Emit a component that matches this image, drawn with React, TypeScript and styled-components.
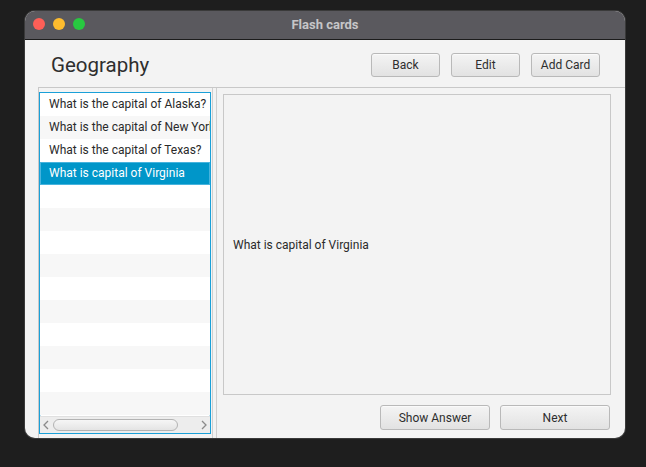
import React from 'react';
import styled, { createGlobalStyle } from 'styled-components';

const cards = [
    'What is the capital of Alaska?',
    'What is the capital of New York?',
    'What is the capital of Texas?',
    'What is capital of Virginia',
];

const ROW_COUNT = 14;

const App: React.FC = () => {
    const selected = 3;
    const rows = Array.from({ length: ROW_COUNT }, (_, i) => cards[i] ?? '');

    return (
        <>
            <GlobalStyle />
            <Desktop>
                <Window>
                    <TitleBar>
                        <Lights>
                            <Light color="#fe5f57" />
                            <Light color="#febc2e" />
                            <Light color="#28c840" />
                        </Lights>
                        <WindowTitle>Flash cards</WindowTitle>
                    </TitleBar>
                    <Header>
                        <DeckTitle>Geography</DeckTitle>
                        <HeaderButtons>
                            <Button>Back</Button>
                            <Button>Edit</Button>
                            <Button>Add Card</Button>
                        </HeaderButtons>
                    </Header>
                    <SplitPane>
                        <LeftPane>
                            <CardList>
                                <Rows>
                                    {rows.map((text, i) => (
                                        <Row key={i} odd={i % 2 === 1} selected={i === selected}>
                                            {text}
                                        </Row>
                                    ))}
                                </Rows>
                                <ScrollBar>
                                    <Arrow>
                                        <svg width="8" height="10" viewBox="0 0 8 10">
                                            <path d="M6 1 L2 5 L6 9" fill="none" stroke="#8a8a8a" strokeWidth="1.3" />
                                        </svg>
                                    </Arrow>
                                    <Track>
                                        <Thumb />
                                    </Track>
                                    <Arrow>
                                        <svg width="8" height="10" viewBox="0 0 8 10">
                                            <path d="M2 1 L6 5 L2 9" fill="none" stroke="#8a8a8a" strokeWidth="1.3" />
                                        </svg>
                                    </Arrow>
                                </ScrollBar>
                            </CardList>
                        </LeftPane>
                        <Divider />
                        <RightPane>
                            <CardView>{cards[selected]}</CardView>
                            <FooterButtons>
                                <Button width={110} height={25}>Show Answer</Button>
                                <Button width={110} height={25}>Next</Button>
                            </FooterButtons>
                        </RightPane>
                    </SplitPane>
                </Window>
            </Desktop>
        </>
    );
};

export default App;

const GlobalStyle = createGlobalStyle`
    html, body {
        margin: 0;
        padding: 0;
        background: #1e1e1e;
    }
    body {
        font-family: Roboto, "Liberation Sans", sans-serif;
    }
`;

const Desktop = styled.div`
    width: 646px;
    height: 467px;
    padding: 11px 0 0 25px;
    box-sizing: border-box;
`;

const Window = styled.div`
    width: 600px;
    height: 427px;
    border-radius: 10px;
    overflow: hidden;
    background: #f3f3f3;
    display: flex;
    flex-direction: column;
    box-shadow: 0 0 0 1px #3a3a3a;
`;

const TitleBar = styled.div`
    height: 28px;
    flex-shrink: 0;
    background: #5a595e;
    border-bottom: 1px solid #1c1c1c;
    display: flex;
    align-items: center;
    justify-content: center;
    position: relative;
`;

const Lights = styled.div`
    position: absolute;
    left: 8px;
    top: 7px;
    display: flex;
    gap: 8px;
`;

const Light = styled.span<{ color: string }>`
    width: 12px;
    height: 12px;
    border-radius: 50%;
    background: ${p => p.color};
`;

const WindowTitle = styled.span`
    font-size: 13px;
    font-weight: bold;
    color: #c6c6c8;
    margin-top: -2px;
`;

const Header = styled.div`
    height: 47px;
    flex-shrink: 0;
    display: flex;
    align-items: flex-start;
    justify-content: space-between;
    padding: 13px 25px 0 26px;
    box-sizing: border-box;
`;

const DeckTitle = styled.h1`
    margin: 0;
    font-size: 20.5px;
    font-weight: normal;
    color: #2e2e2e;
    line-height: 25px;
`;

const HeaderButtons = styled.div`
    display: flex;
    gap: 11px;
`;

const Button = styled.button<{ width?: number; height?: number }>`
    width: ${p => p.width ?? 69}px;
    height: ${p => p.height ?? 24}px;
    padding: 0;
    border: 1px solid #b9b9b9;
    border-radius: 3px;
    background: linear-gradient(#f4f4f4, #e2e2e2);
    font-family: Roboto, "Liberation Sans", sans-serif;
    font-size: 12px;
    color: #2e2e2e;
    box-shadow: inset 0 1px 0 #fafafa;
`;

const SplitPane = styled.div`
    flex: 1;
    display: flex;
    margin-left: 13px;
    border-top: 1px solid #c8c8c8;
    border-left: 1px solid #c8c8c8;
    min-height: 0;
`;

const LeftPane = styled.div`
    width: 173px;
    padding: 4px 0 4px 0;
    box-sizing: border-box;
    display: flex;
`;

const CardList = styled.div`
    width: 172px;
    border: 1px solid #1aa0d8;
    box-shadow: inset 0 0 0 1px #bfe3f3;
    background: #fff;
    display: flex;
    flex-direction: column;
    box-sizing: border-box;
`;

const Rows = styled.div`
    flex: 1;
    overflow: hidden;
`;

const Row = styled.div<{ odd: boolean; selected: boolean }>`
    height: 23px;
    white-space: nowrap;
    overflow: hidden;
    font-size: 12px;
    box-sizing: border-box;
    color: ${p => (p.selected ? '#fff' : '#2a2a2a')};
    background: ${p => (p.selected ? '#0096c9' : p.odd ? '#f7f7f7' : '#fff')};
    border: ${p => (p.selected ? '1px solid #47b3dd' : 'none')};
    line-height: ${p => (p.selected ? '21px' : '23px')};
    padding-left: ${p => (p.selected ? '8px' : '9px')};
`;

const ScrollBar = styled.div`
    height: 16px;
    flex-shrink: 0;
    background: #ededed;
    border-top: 1px solid #e0e0e0;
    display: flex;
    align-items: center;
`;

const Arrow = styled.div`
    width: 12px;
    display: flex;
    justify-content: center;
    align-items: center;
`;

const Track = styled.div`
    flex: 1;
    padding: 0 20px 0 1px;
    display: flex;
`;

const Thumb = styled.div`
    flex: 1;
    height: 10px;
    border: 1px solid #b3b3b3;
    border-radius: 6px;
    background: linear-gradient(#f6f6f6, #e4e4e4);
`;

const Divider = styled.div`
    width: 3px;
    border-left: 1px solid #cfcfcf;
    border-right: 1px solid #cfcfcf;
`;

const RightPane = styled.div`
    flex: 1;
    display: flex;
    flex-direction: column;
    padding: 6px 14px 8px 6px;
    box-sizing: border-box;
`;

const CardView = styled.div`
    flex: 1;
    border: 1px solid #c8c8c8;
    display: flex;
    align-items: center;
    padding-left: 9px;
    font-size: 12px;
    color: #2a2a2a;
`;

const FooterButtons = styled.div`
    display: flex;
    justify-content: flex-end;
    gap: 10px;
    margin-top: 10px;
    padding-right: 1px;
`;
